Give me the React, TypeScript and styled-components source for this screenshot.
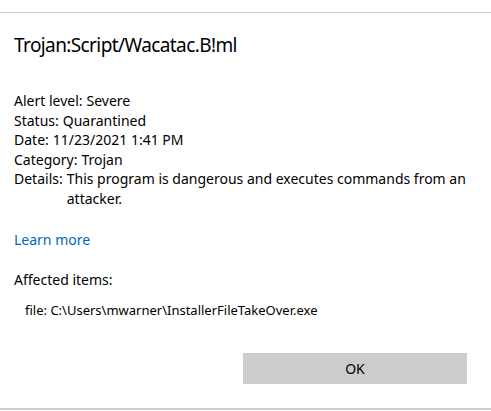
import React from "react";
import styled, { createGlobalStyle } from "styled-components";

const GlobalStyle = createGlobalStyle`
  html, body {
    margin: 0;
    padding: 0;
    background: #fff;
  }
  body {
    font-family: "Noto Sans", "Open Sans", sans-serif;
    color: #000;
    -webkit-font-smoothing: antialiased;
  }
`;

const Page = styled.div`
  padding-top: 12px;
  width: 491px;
`;

const Dialog = styled.div`
  border-top: 1px solid #cccccc;
  border-bottom: 2px solid #cccccc;
`;

const Content = styled.div`
  padding: 18px 24px 0 14px;
`;

const Title = styled.h1`
  margin: 0;
  font-size: 19px;
  line-height: 28px;
  font-weight: 400;
  letter-spacing: -0.6px;
`;

const InfoList = styled.dl`
  margin: 32px 0 0;
  font-size: 14px;
  line-height: 19.5px;
`;

const InfoRow = styled.div`
  display: flex;
  gap: 4px;
`;

const Label = styled.dt`
  margin: 0;
  flex: none;
`;

const Value = styled.dd`
  margin: 0;
`;

const LearnMore = styled.a`
  display: inline-block;
  margin-top: 22px;
  font-size: 14px;
  line-height: 19.5px;
  color: #0067c0;
  text-decoration: none;
  cursor: pointer;
`;

const SectionHeading = styled.div`
  margin-top: 20px;
  font-size: 14px;
  line-height: 19.5px;
`;

const ItemList = styled.ul`
  list-style: none;
  margin: 11px 0 0;
  padding: 0 0 0 11px;
  font-size: 13px;
  line-height: 18px;
`;

const Footer = styled.div`
  display: flex;
  justify-content: flex-end;
  padding: 34px 24px 24px;
`;

const Button = styled.button`
  width: 224px;
  height: 31px;
  border: none;
  background: #cccccc;
  font-family: inherit;
  font-size: 14px;
  color: #000;
  cursor: pointer;
`;

const details: [string, string][] = [
  ["Alert level:", "Severe"],
  ["Status:", "Quarantined"],
  ["Date:", "11/23/2021 1:41 PM"],
  ["Category:", "Trojan"],
  ["Details:", "This program is dangerous and executes commands from an attacker."],
];

export default function App() {
  return (
    <>
      <GlobalStyle />
      <Page>
        <Dialog>
          <Content>
            <Title>Trojan:Script/Wacatac.B!ml</Title>
            <InfoList>
              {details.map(([label, value]) => (
                <InfoRow key={label}>
                  <Label>{label}</Label>
                  <Value>{value}</Value>
                </InfoRow>
              ))}
            </InfoList>
            <LearnMore>Learn more</LearnMore>
            <SectionHeading>Affected items:</SectionHeading>
            <ItemList>
              <li>file: C:\Users\mwarner\InstallerFileTakeOver.exe</li>
            </ItemList>
          </Content>
          <Footer>
            <Button>OK</Button>
          </Footer>
        </Dialog>
      </Page>
    </>
  );
}
